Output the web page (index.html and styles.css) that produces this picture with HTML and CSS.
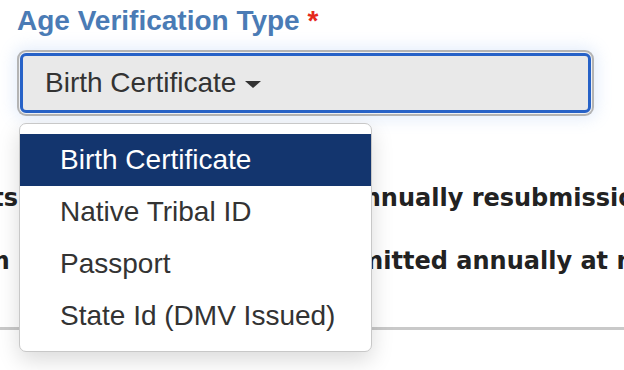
FILE: index.html
```html
<!DOCTYPE html>
<html lang="en">
<head>
  <meta charset="UTF-8" />
  <meta name="viewport" content="width=device-width, initial-scale=1.0"/>
  <title>Age Verification</title>
  <link rel="stylesheet" href="styles.css">
</head>
<body>
  <div class="form-group">
    <label class="field-label">Age Verification Type <span class="required">*</span></label>

    <div class="select-btn">
      <span>Birth Certificate</span>
      <span class="caret"></span>
    </div>

    <ul class="dropdown">
      <li class="active">Birth Certificate</li>
      <li>Native Tribal ID</li>
      <li>Passport</li>
      <li>State Id (DMV Issued)</li>
    </ul>
  </div>

  <p class="note note-first">documents are required, and must annually resubmission is required.</p>
  <p class="note note-second">form must be dated and resubmitted annually at new enrollment.</p>

  <hr class="divider">
</body>
</html>
```

FILE: styles.css
```css
html {
  overflow: hidden;
}
body {
  margin: 0;
  padding-bottom: 40px;
  background: #fff;
  font-family: 'Liberation Sans', Arial, sans-serif;
  color: #333;
}
.form-group {
  position: relative;
  padding: 6px 0 0 17px;
}
.field-label {
  display: block;
  font-size: 28px;
  font-weight: bold;
  line-height: 30px;
  color: #4a7bb5;
}
.required {
  color: #e5281c;
}
.select-btn {
  display: flex;
  align-items: center;
  gap: 9px;
  box-sizing: border-box;
  width: 571px;
  height: 60px;
  margin: 17px 0 0 3px;
  padding-left: 22px;
  background: #e9e9e9;
  border: 3px solid #2762c7;
  border-radius: 6px;
  box-shadow: 0 0 0 1px #eef0f4, 0 0 0 3px #b4b4b4, 0 0 16px 6px rgba(120, 165, 235, 0.2);
  font-size: 28px;
  color: #333;
}
.caret {
  width: 0;
  height: 0;
  margin-top: 3px;
  border-left: 8px solid transparent;
  border-right: 8px solid transparent;
  border-top: 7px solid #333;
}
.dropdown {
  position: absolute;
  left: 19px;
  top: 123px;
  z-index: 2;
  width: 353px;
  box-sizing: border-box;
  margin: 0;
  padding: 10px 0 9px;
  list-style: none;
  background: #fff;
  border: 1px solid #c8c8c8;
  border-radius: 7px;
  box-shadow: 0 8px 22px rgba(0, 0, 0, 0.15);
}
.dropdown li {
  height: 52px;
  line-height: 52px;
  padding-left: 40px;
  font-size: 28px;
  color: #333;
}
.dropdown li.active {
  background: #13356e;
  color: #fff;
}
.note {
  margin: 0;
  white-space: nowrap;
  font-family: 'DejaVu Sans', Verdana, sans-serif;
  font-weight: bold;
  font-size: 24px;
  line-height: 32px;
  color: #222;
}
.note-first {
  margin-top: 69px;
  text-indent: -131px;
}
.note-second {
  margin-top: 31px;
  text-indent: -54px;
}
.divider {
  margin: 50px 0 0;
  border: none;
  height: 3px;
  background: #c9c9c9;
}
```
